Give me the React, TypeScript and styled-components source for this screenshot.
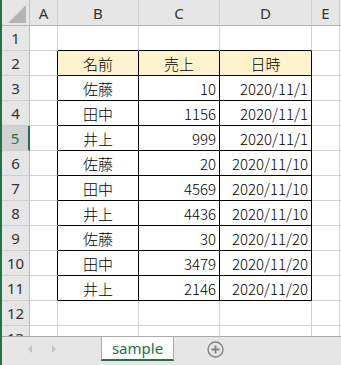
import React from "react";
import styled, { createGlobalStyle, css } from "styled-components";

const GREEN = "#217346";

const GlobalStyle = createGlobalStyle`
  html, body {
    margin: 0;
    padding: 0;
    background: #ffffff;
    overflow: hidden;
  }
`;

const Window = styled.div`
  width: 341px;
  height: 365px;
  box-sizing: border-box;
  border-left: 2px solid ${GREEN};
  display: flex;
  flex-direction: column;
  font-family: "Noto Sans CJK JP", "Noto Sans", sans-serif;
`;

const Sheet = styled.div`
  height: 336px;
  overflow: hidden;
  display: grid;
  grid-template-columns: 28px 28px 81px 81px 92px 28px 1fr;
  grid-template-rows: 26px;
  grid-auto-rows: 25px;
`;

const HeadBase = css`
  box-sizing: border-box;
  background: #e6e6e6;
  color: #333333;
  font-family: "Noto Sans", "Liberation Sans", sans-serif;
  font-size: 15px;
  display: flex;
  align-items: center;
  justify-content: center;
`;

const Corner = styled.div`
  ${HeadBase};
  border-right: 1px solid #c0c0c0;
  border-bottom: 1px solid #b4b4b4;
  align-items: flex-end;
  justify-content: flex-end;
  padding: 0 3px 2px 0;
`;

const ColHead = styled.div`
  ${HeadBase};
  border-right: 1px solid #cfcfcf;
  border-bottom: 1px solid #b4b4b4;
`;

const RowHead = styled.div<{ $selected?: boolean }>`
  ${HeadBase};
  border-bottom: 1px solid #cfcfcf;
  border-right: ${(p) => (p.$selected ? `2px solid ${GREEN}` : "1px solid #c0c0c0")};
  background: ${(p) => (p.$selected ? "#d2d2d2" : "#e6e6e6")};
  color: ${(p) => (p.$selected ? GREEN : "#333333")};
`;

const Cell = styled.div<{
  $align?: "left" | "center" | "right";
  $fill?: string;
  $darkRight?: boolean;
  $darkBottom?: boolean;
}>`
  box-sizing: border-box;
  background: ${(p) => p.$fill || "#ffffff"};
  border-right: 1px solid ${(p) => (p.$darkRight ? "#000000" : "#d4d4d4")};
  border-bottom: 1px solid ${(p) => (p.$darkBottom ? "#000000" : "#d4d4d4")};
  display: flex;
  align-items: center;
  justify-content: ${(p) =>
    p.$align === "center" ? "center" : p.$align === "right" ? "flex-end" : "flex-start"};
  padding: 0 3px;
  font-size: 15px;
  font-weight: 300;
  color: #000000;
  white-space: nowrap;
  overflow: hidden;
`;

const TabBar = styled.div`
  flex: 1;
  box-sizing: border-box;
  background: #e6e6e6;
  border-top: 1px solid #ababab;
  display: flex;
  align-items: flex-start;
`;

const NavArea = styled.div`
  width: 99px;
  height: 24px;
  display: flex;
  align-items: center;
  gap: 20px;
  padding-left: 26px;
  box-sizing: border-box;
`;

const Arrow = styled.span<{ $dir: "left" | "right" }>`
  width: 0;
  height: 0;
  border-top: 4px solid transparent;
  border-bottom: 4px solid transparent;
  ${(p) =>
    p.$dir === "left"
      ? "border-right: 4px solid #c4c4c4;"
      : "border-left: 4px solid #c4c4c4;"}
`;

const Tab = styled.div`
  width: 73px;
  height: 24px;
  box-sizing: border-box;
  background: #ffffff;
  border-left: 1px solid #ababab;
  border-right: 1px solid #ababab;
  border-bottom: 2px solid ${GREEN};
  color: ${GREEN};
  font-family: "Noto Sans", "Liberation Sans", sans-serif;
  font-size: 15px;
  display: flex;
  align-items: center;
  justify-content: center;
  padding-bottom: 1px;
`;

const AddButton = styled.div`
  margin-left: 33px;
  margin-top: 4px;
  width: 17px;
  height: 17px;
  display: flex;
`;

const cols = ["A", "B", "C", "D", "E", ""];

const data: [string, number, string][] = [
  ["佐藤", 10, "2020/11/1"],
  ["田中", 1156, "2020/11/1"],
  ["井上", 999, "2020/11/1"],
  ["佐藤", 20, "2020/11/10"],
  ["田中", 4569, "2020/11/10"],
  ["井上", 4436, "2020/11/10"],
  ["佐藤", 30, "2020/11/20"],
  ["田中", 3479, "2020/11/20"],
  ["井上", 2146, "2020/11/20"],
];

const cellContent = (row: number, col: number) => {
  if (row === 2) {
    if (col === 1) return "名前";
    if (col === 2) return "売上";
    if (col === 3) return "日時";
  }
  if (row >= 3 && row <= 11) {
    const d = data[row - 3];
    if (col === 1) return d[0];
    if (col === 2) return String(d[1]);
    if (col === 3) return d[2];
  }
  return "";
};

const App = () => {
  const rows = Array.from({ length: 13 }, (_, i) => i + 1);
  return (
    <>
      <GlobalStyle />
      <Window>
        <Sheet>
          <Corner>
            <svg width="18" height="18" viewBox="0 0 18 18">
              <polygon points="0,18 18,18 18,0" fill="#b4b4b4" />
            </svg>
          </Corner>
          {cols.map((c, i) => (
            <ColHead key={i}>{c}</ColHead>
          ))}
          {rows.map((r) => {
            const inTable = r >= 2 && r <= 11;
            return (
              <React.Fragment key={r}>
                <RowHead $selected={r === 5}>{r}</RowHead>
                {cols.map((_, c) => {
                  const tableCol = c >= 1 && c <= 3;
                  const isTable = inTable && tableCol;
                  return (
                    <Cell
                      key={c}
                      $align={c === 1 || r === 2 ? "center" : "right"}
                      $fill={isTable && r === 2 ? "#fff2cc" : undefined}
                      $darkRight={inTable && c <= 3}
                      $darkBottom={tableCol && r >= 1 && r <= 11}
                    >
                      {cellContent(r, c)}
                    </Cell>
                  );
                })}
              </React.Fragment>
            );
          })}
        </Sheet>
        <TabBar>
          <NavArea>
            <Arrow $dir="left" />
            <Arrow $dir="right" />
          </NavArea>
          <Tab>sample</Tab>
          <AddButton>
            <svg width="17" height="17" viewBox="0 0 17 17">
              <circle cx="8.5" cy="8.5" r="7.5" fill="none" stroke="#808080" strokeWidth="1.3" />
              <path d="M8.5 4.5 V12.5 M4.5 8.5 H12.5" stroke="#808080" strokeWidth="1.8" />
            </svg>
          </AddButton>
        </TabBar>
      </Window>
    </>
  );
};

export default App;
